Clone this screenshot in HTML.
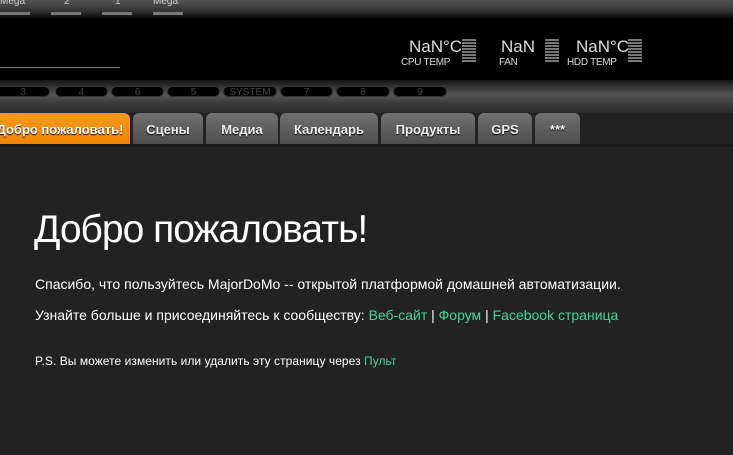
<!DOCTYPE html>
<html><head><meta charset="utf-8"><style>
*{margin:0;padding:0;box-sizing:border-box}
body{width:733px;height:455px;overflow:hidden;background:#222;font-family:"Liberation Sans",Arial,sans-serif;position:relative}
.abs{position:absolute}
.top{left:0;top:0;width:733px;height:18px;background:linear-gradient(#555,#333 60%,#0a0a0a)}
.black{left:0;top:18px;width:733px;height:64px;background:#000}
.band{left:0;top:80px;width:733px;height:33px;background:linear-gradient(#151515,#3a3a3a 25%,#555 45%,#3c3c3c 70%,#2a2a2a)}
.tl{color:#ccc;font-size:10px;top:-4px}
.dash{top:12px;height:3px;width:30px;background:#777}
.pill{top:86px;height:11px;border-radius:6px;background:#000;color:#444;font-size:10px;text-align:center;line-height:11px;border:1px solid #333}
.tabs{left:0;top:113px;height:32px}
.tab{position:absolute;top:0;height:32px;border-radius:6px 6px 0 0;background:linear-gradient(#707070,#5e5e5e 50%,#4e4e4e);color:#eee;font-weight:bold;font-size:13px;text-align:center;line-height:34px;text-shadow:0 1px 1px #000}
.strip{left:0;top:144px;width:733px;height:3px;background:#1a1a1a}
.v{color:#ddd;font-size:17px}
.l{color:#ddd;font-size:10px;letter-spacing:-0.3px}
.bars{width:14px;height:24px;background:repeating-linear-gradient(#777 0 2px,transparent 2px 3px)}
.c{color:#fff;font-size:14px;left:35px}
a{color:#3ed79a;text-decoration:none}
</style></head><body>
<div class="abs top"></div>
<div class="abs black"></div>
<div class="abs tl" style="left:0">Mega</div>
<div class="abs tl" style="left:64px">2</div>
<div class="abs tl" style="left:115px">1</div>
<div class="abs tl" style="left:153px">Mega</div>
<div class="abs dash" style="left:0"></div>
<div class="abs dash" style="left:51px"></div>
<div class="abs dash" style="left:102px"></div>
<div class="abs dash" style="left:153px"></div>
<div class="abs" style="left:0;top:67px;width:120px;height:1px;background:#777"></div>

<div class="abs v" style="left:409px;top:37px">NaN°C</div>
<div class="abs l" style="left:401px;top:57px">CPU TEMP</div>
<div class="abs bars" style="left:462px;top:39px"></div>
<div class="abs v" style="left:501px;top:37px">NaN</div>
<div class="abs l" style="left:499px;top:57px">FAN</div>
<div class="abs bars" style="left:545px;top:39px"></div>
<div class="abs v" style="left:576px;top:37px">NaN°C</div>
<div class="abs l" style="left:567px;top:57px">HDD TEMP</div>
<div class="abs bars" style="left:628px;top:39px"></div>

<div class="abs band"></div>
<div class="abs pill" style="left:-4px;width:54px">3</div>
<div class="abs pill" style="left:55px;width:53px">4</div>
<div class="abs pill" style="left:111px;width:53px">6</div>
<div class="abs pill" style="left:167px;width:53px">5</div>
<div class="abs pill" style="left:223px;width:54px">SYSTEM</div>
<div class="abs pill" style="left:280px;width:53px">7</div>
<div class="abs pill" style="left:336px;width:54px">8</div>
<div class="abs pill" style="left:393px;width:54px">9</div>

<div class="abs tabs">
<div class="tab" style="left:-10px;width:140px;background:linear-gradient(#f59a20,#f08400);color:#fff">Добро пожаловать!</div>
<div class="tab" style="left:133px;width:70px">Сцены</div>
<div class="tab" style="left:206px;width:72px">Медиа</div>
<div class="tab" style="left:280px;width:98px">Календарь</div>
<div class="tab" style="left:381px;width:94px">Продукты</div>
<div class="tab" style="left:478px;width:54px">GPS</div>
<div class="tab" style="left:535px;width:45px">***</div>
</div>
<div class="abs strip"></div>

<div class="abs" style="left:34px;top:208px;color:#fff;font-size:39px;letter-spacing:-1px">Добро пожаловать!</div>
<div class="abs c" style="top:276px">Спасибо, что пользуйтесь MajorDoMo -- открытой платформой домашней автоматизации.</div>
<div class="abs c" style="top:307px">Узнайте больше и присоединяйтесь к сообществу: <a>Веб-сайт</a> | <a>Форум</a> | <a>Facebook страница</a></div>
<div class="abs c" style="top:354px;font-size:12px;letter-spacing:0.05px">P.S. Вы можете изменить или удалить эту страницу через <a>Пульт</a></div>
</body></html>
